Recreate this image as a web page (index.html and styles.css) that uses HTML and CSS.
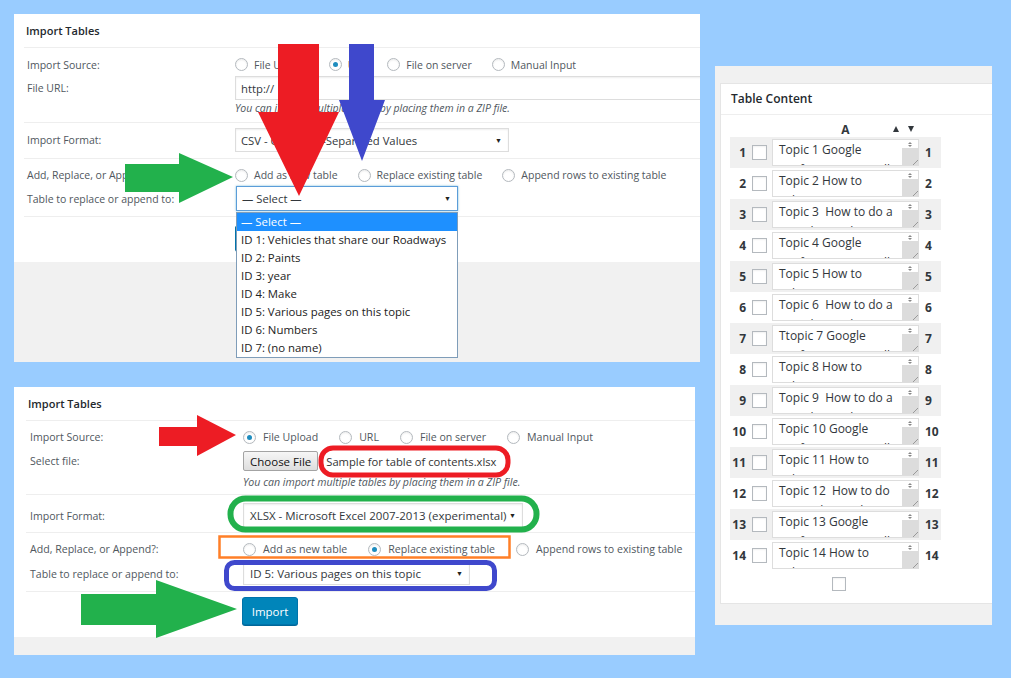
FILE: index.html
```html
<!DOCTYPE html>
<html lang="en">
<head>
<meta charset="utf-8">
<title>Import Tables</title>
<link rel="stylesheet" href="styles.css">
</head>
<body>
<div class="canvas">

  <section class="win win-top">
    <div class="box">
      <h2 class="hd">Import Tables</h2>
      <div class="form">
        <div class="grp g1">
          <div class="line l-radio"><span class="lbl">Import Source:</span>
            <div class="radios">
              <span class="opt"><i class="rad"></i>File Upload</span>
              <span class="opt"><i class="rad on"></i>URL</span>
              <span class="opt"><i class="rad"></i>File on server</span>
              <span class="opt"><i class="rad"></i>Manual Input</span>
            </div>
          </div>
          <div class="line l-input"><span class="lbl">File URL:</span>
            <div class="textbox url">http://</div>
          </div>
          <div class="line l-desc"><span></span><em class="desc">You can import multiple tables by placing them in a ZIP file.</em></div>
        </div>
        <div class="grp g2">
          <div class="line l-select"><span class="lbl">Import Format:</span>
            <div class="select fmt"><span>CSV - Character-Separated Values</span><span class="caret">&#9660;</span></div>
          </div>
        </div>
        <div class="grp g3">
          <div class="line l-radio2"><span class="lbl">Add, Replace, or Append?:</span>
            <div class="radios">
              <span class="opt"><i class="rad"></i>Add as new table</span>
              <span class="opt"><i class="rad"></i>Replace existing table</span>
              <span class="opt"><i class="rad"></i>Append rows to existing table</span>
            </div>
          </div>
          <div class="line l-select2"><span class="lbl">Table to replace or append to:</span>
            <div class="select tbl focus"><span>&mdash; Select &mdash;</span><span class="caret">&#9660;</span></div>
          </div>
        </div>
        <div class="grp g4">
          <div class="line"><span></span><span class="btn-primary">Import</span></div>
        </div>
      </div>
    </div>
    <ul class="dropdown">
      <li class="hl">&mdash; Select &mdash;</li>
      <li>ID 1: Vehicles that share our Roadways</li>
      <li>ID 2: Paints</li>
      <li>ID 3: year</li>
      <li>ID 4: Make</li>
      <li>ID 5: Various pages on this topic</li>
      <li>ID 6: Numbers</li>
      <li>ID 7: (no name)</li>
    </ul>
  </section>

  <section class="win win-bot">
    <div class="box">
      <h2 class="hd">Import Tables</h2>
      <div class="form">
        <div class="grp g1">
          <div class="line l-radio"><span class="lbl">Import Source:</span>
            <div class="radios">
              <span class="opt"><i class="rad on"></i>File Upload</span>
              <span class="opt"><i class="rad"></i>URL</span>
              <span class="opt"><i class="rad"></i>File on server</span>
              <span class="opt"><i class="rad"></i>Manual Input</span>
            </div>
          </div>
          <div class="line l-file"><span class="lbl">Select file:</span>
            <div class="filepick"><span class="btn-file">Choose File</span><span class="fname">Sample for table of contents.xlsx</span></div>
          </div>
          <div class="line l-desc"><span></span><em class="desc">You can import multiple tables by placing them in a ZIP file.</em></div>
        </div>
        <div class="grp g2">
          <div class="line l-select"><span class="lbl">Import Format:</span>
            <div class="select fmt"><span>XLSX - Microsoft Excel 2007-2013 (experimental)</span><span class="caret">&#9660;</span></div>
          </div>
        </div>
        <div class="grp g3">
          <div class="line l-radio2"><span class="lbl">Add, Replace, or Append?:</span>
            <div class="radios">
              <span class="opt"><i class="rad"></i>Add as new table</span>
              <span class="opt"><i class="rad on"></i>Replace existing table</span>
              <span class="opt"><i class="rad"></i>Append rows to existing table</span>
            </div>
          </div>
          <div class="line l-select2"><span class="lbl">Table to replace or append to:</span>
            <div class="select tbl"><span>ID 5: Various pages on this topic</span><span class="caret">&#9660;</span></div>
          </div>
        </div>
        <div class="grp g4">
          <div class="line"><span></span><span class="btn-primary">Import</span></div>
        </div>
      </div>
    </div>
  </section>

  <section class="win win-right">
    <div class="box">
      <h2 class="hd">Table Content</h2>
      <div class="tc">
        <div class="colhd">
          <span class="pad"></span>
          <div class="colA"><span></span><b>A</b><span class="sort"><i class="up"></i><i class="down"></i></span></div>
        </div>
        <div class="rows">
          <div class="row alt"><b class="num">1</b><i class="cb"></i><div class="ta"><p>Topic 1 Google verification using all</p><div class="sb"><span class="sb-top"></span><span class="sb-grip"></span></div></div><b class="num2">1</b></div>
          <div class="row"><b class="num">2</b><i class="cb"></i><div class="ta"><p>Topic 2 How to submit a sitemap</p><div class="sb"><span class="sb-top"></span><span class="sb-grip"></span></div></div><b class="num2">2</b></div>
          <div class="row alt"><b class="num">3</b><i class="cb"></i><div class="ta"><p>Topic 3  How to do a complete website audit</p><div class="sb"><span class="sb-top"></span><span class="sb-grip"></span></div></div><b class="num2">3</b></div>
          <div class="row"><b class="num">4</b><i class="cb"></i><div class="ta"><p>Topic 4 Google verification using all</p><div class="sb"><span class="sb-top"></span><span class="sb-grip"></span></div></div><b class="num2">4</b></div>
          <div class="row alt"><b class="num">5</b><i class="cb"></i><div class="ta"><p>Topic 5 How to submit a sitemap</p><div class="sb"><span class="sb-top"></span><span class="sb-grip"></span></div></div><b class="num2">5</b></div>
          <div class="row"><b class="num">6</b><i class="cb"></i><div class="ta"><p>Topic 6  How to do a complete website audit</p><div class="sb"><span class="sb-top"></span><span class="sb-grip"></span></div></div><b class="num2">6</b></div>
          <div class="row alt"><b class="num">7</b><i class="cb"></i><div class="ta"><p>Ttopic 7 Google verification using all</p><div class="sb"><span class="sb-top"></span><span class="sb-grip"></span></div></div><b class="num2">7</b></div>
          <div class="row"><b class="num">8</b><i class="cb"></i><div class="ta"><p>Topic 8 How to submit a sitemap</p><div class="sb"><span class="sb-top"></span><span class="sb-grip"></span></div></div><b class="num2">8</b></div>
          <div class="row alt"><b class="num">9</b><i class="cb"></i><div class="ta"><p>Topic 9  How to do a complete website audit</p><div class="sb"><span class="sb-top"></span><span class="sb-grip"></span></div></div><b class="num2">9</b></div>
          <div class="row"><b class="num">10</b><i class="cb"></i><div class="ta"><p>Topic 10 Google verification using all</p><div class="sb"><span class="sb-top"></span><span class="sb-grip"></span></div></div><b class="num2">10</b></div>
          <div class="row alt"><b class="num">11</b><i class="cb"></i><div class="ta"><p>Topic 11 How to submit a sitemap</p><div class="sb"><span class="sb-top"></span><span class="sb-grip"></span></div></div><b class="num2">11</b></div>
          <div class="row"><b class="num">12</b><i class="cb"></i><div class="ta"><p>Topic 12  How to do a complete website audit</p><div class="sb"><span class="sb-top"></span><span class="sb-grip"></span></div></div><b class="num2">12</b></div>
          <div class="row alt"><b class="num">13</b><i class="cb"></i><div class="ta"><p>Topic 13 Google verification using all</p><div class="sb"><span class="sb-top"></span><span class="sb-grip"></span></div></div><b class="num2">13</b></div>
          <div class="row"><b class="num">14</b><i class="cb"></i><div class="ta"><p>Topic 14 How to submit a sitemap</p><div class="sb"><span class="sb-top"></span><span class="sb-grip"></span></div></div><b class="num2">14</b></div>
        </div>
        <div class="foot"><i class="cb"></i></div>
      </div>
    </div>
  </section>

  <svg class="overlay" width="1011" height="678" viewBox="0 0 1011 678" aria-hidden="true">
    <!-- top panel arrows -->
    <polygon fill="#3f48cc" points="349,44 374,44 374,100 385,100 362,161 339,100 349,100"/>
    <polygon fill="#ed1c24" points="278,44 319,44 319,112 339,112 299,196 258,112 278,112"/>
    <polygon fill="#22b14c" points="125,164 179,164 179,153 233,177 179,203 179,192 125,192"/>
    <!-- bottom panel marks -->
    <polygon fill="#ed1c24" points="159,427 197,427 197,415 236,435 197,456 197,446 159,446"/>
    <polygon fill="#22b14c" points="81,594 156,594 156,580 237,609 156,638 156,625 81,625"/>
    <rect x="321" y="448" width="187" height="27" rx="12" fill="none" stroke="#ed1c24" stroke-width="5"/>
    <rect x="230.5" y="498.5" width="306" height="31" rx="15" fill="none" stroke="#22b14c" stroke-width="6"/>
    <rect x="219.5" y="536.5" width="290" height="21" fill="none" stroke="#ff7f27" stroke-width="2.5"/>
    <rect x="226.5" y="562.5" width="268" height="26" rx="8" fill="none" stroke="#3f48cc" stroke-width="5"/>
  </svg>
</div>
</body>
</html>
```

FILE: styles.css
```css
* { box-sizing: border-box; }

html, body {
  margin: 0;
  padding: 0;
}

body {
  background: #99ccff;
  font-family: "Open Sans", "Noto Sans", sans-serif;
  color: #444;
}

.canvas {
  position: relative;
  width: 1011px;
  height: 678px;
  overflow: hidden;
}

/* windows on the canvas */
.win {
  position: absolute;
  background: #f1f1f1;
  overflow: hidden;
}
.win-top { left: 14px; top: 14px; width: 686px; height: 348px; }
.win-bot { left: 14px; top: 387px; width: 681px; height: 268px; }
.win-right { left: 715px; top: 66px; width: 277px; height: 559px; padding: 17px 0 0 5px; }

.box { background: #fff; }
.win-top .box { height: 248px; }
.win-bot .box { height: 250px; }
.win-right .box { height: 521px; border: 1px solid #e5e5e5; border-right: 0; }

.hd {
  margin: 0;
  height: 33px;
  line-height: 33px;
  font-size: 11px;
  font-weight: 600;
  color: #23282d;
}
.win-top .hd { padding-left: 12px; }
.win-bot .hd { padding-left: 14px; }

/* form */
.form { border-top: 1px solid #eee; }
.win-top .form { margin-left: 10px; font-size: 10.5px; }
.win-bot .form { margin-left: 12px; font-size: 10.6px; }

.grp { border-bottom: 1px solid #eee; }
.grp.g4 { border-bottom: 0; }

.line {
  display: grid;
  align-items: center;
  color: #50575e;
}
.win-top .line { grid-template-columns: 211px 1fr; }
.win-bot .line { grid-template-columns: 217px 1fr; }

.win-top .lbl { padding-left: 3px; }
.win-bot .lbl { padding-left: 4px; }

.radios {
  display: flex;
  align-items: center;
  gap: 20px;
  white-space: nowrap;
}
.win-bot .radios { gap: 21px; }

.opt {
  display: inline-flex;
  align-items: center;
  color: #50575e;
}

.rad {
  position: relative;
  display: inline-block;
  width: 13px;
  height: 13px;
  border: 1px solid #b4b9be;
  border-radius: 50%;
  background: #fff;
  box-shadow: inset 0 1px 2px rgba(0,0,0,.08);
  margin-right: 6px;
  flex: none;
}
.win-bot .rad { margin-right: 7px; }
.rad.on::after {
  content: "";
  position: absolute;
  left: 3px;
  top: 3px;
  width: 5px;
  height: 5px;
  border-radius: 50%;
  background: #1e8cbe;
}

.textbox, .select {
  border: 1px solid #ddd;
  background: #fff;
  box-shadow: inset 0 1px 2px rgba(0,0,0,.07);
  color: #32373c;
  display: flex;
  align-items: center;
  white-space: nowrap;
}
.win-top .textbox, .win-top .select { font-size: 11.3px; }
.win-bot .select { font-size: 11.5px; }

.url { width: 480px; height: 24px; padding-left: 5px; }

.select { justify-content: space-between; padding: 0 6px 0 5px; }
.caret { font-size: 7px; color: #222; }

.desc {
  font-style: italic;
  color: #50575e;
  white-space: nowrap;
}

/* top panel rows */
.win-top .g1 { padding: 6px 0; }
.win-top .l-radio { height: 19px; margin-top: 1px; }
.win-top .l-input { height: 24px; margin-top: 2px; }
.win-top .l-desc { height: 16px; }
.win-top .g2 { padding: 5px 0 6px; }
.win-top .fmt { width: 274px; height: 24px; }
.win-top .g3 { padding: 7px 0 5px; }
.win-top .l-radio2 { height: 18px; }
.win-top .l-select2 { margin-top: 2px; }
.win-top .tbl { width: 222px; height: 25px; margin-left: 1px; }
.select.focus { border-color: #5b9dd9; box-shadow: 0 0 2px rgba(30,140,190,.6); }
.win-top .g4 { padding-top: 8px; }

/* bottom panel rows */
.win-bot .g1 { padding: 7px 0 4px; }
.win-bot .l-radio { height: 18px; }
.win-bot .l-file { height: 22px; margin-top: 4px; }
.win-bot .l-desc { height: 16px; margin-top: 2px; }
.win-bot .g2 { padding: 8px 0 4px; }
.win-bot .fmt { width: 280px; height: 25px; padding-left: 6px; }
.win-bot .g3 { padding: 7px 0 6px; }
.win-bot .l-radio2 { height: 18px; }
.win-bot .l-select2 { margin-top: 4px; }
.win-bot .tbl { width: 227px; height: 23px; padding-left: 6px; }
.win-bot .g4 { padding-top: 5px; }

.filepick {
  display: flex;
  align-items: center;
  gap: 8px;
  white-space: nowrap;
}
.btn-file {
  display: inline-flex;
  align-items: center;
  height: 20px;
  padding: 0 6px;
  font-size: 11.5px;
  color: #111;
  border: 1px solid #a3a3a3;
  border-radius: 2px;
  background: linear-gradient(#f6f6f6, #dedede);
}
.fname { font-size: 11.2px; color: #333; }

.btn-primary {
  justify-self: start;
  display: inline-flex;
  align-items: center;
  justify-content: center;
  background: #0085ba;
  border: 1px solid #0073aa;
  border-radius: 3px;
  box-shadow: 0 1px 0 #006799;
  color: #fff;
  font-size: 11.5px;
}
.win-top .btn-primary { width: 56px; height: 26px; }
.win-bot .btn-primary { width: 56px; height: 28px; margin-left: -1px; }

/* open dropdown list */
.dropdown {
  position: absolute;
  left: 222px;
  top: 198px;
  width: 222px;
  margin: 0;
  padding: 0;
  list-style: none;
  background: #fff;
  border: 1px solid #7f9db9;
  font-size: 11.4px;
  color: #222;
}
.dropdown li {
  height: 18px;
  line-height: 18px;
  padding-left: 4px;
  white-space: nowrap;
}
.dropdown li.hl { background: #1e90ff; color: #fff; }

/* table content panel */
.win-right .hd {
  height: 31px;
  line-height: 30px;
  padding-left: 10px;
  font-size: 12px;
  border-bottom: 1px solid #eee;
}
.tc { padding: 6px 10px 0 9px; }

.colhd { display: flex; height: 16px; align-items: center; }
.colhd .pad { width: 42px; flex: none; }
.colA {
  width: 147px;
  display: grid;
  grid-template-columns: 1fr auto 1fr;
  align-items: center;
}
.colA b { font-size: 12px; color: #32373c; }
.sort { justify-self: end; display: flex; gap: 9px; padding-right: 5px; }
.sort i { width: 0; height: 0; border-left: 3.5px solid transparent; border-right: 3.5px solid transparent; }
.sort .up { border-bottom: 6px solid #32373c; }
.sort .down { border-top: 6px solid #32373c; }

.rows { display: flex; flex-direction: column; }
.row {
  display: flex;
  align-items: center;
  height: 31px;
  width: 211px;
}
.row.alt { background: #f0f0f0; }
.num, .num2 { font-size: 12px; color: #32373c; font-weight: 700; }
.num { width: 16px; text-align: right; flex: none; }
.num2 { margin-left: 6px; }

.cb {
  display: inline-block;
  width: 15px;
  height: 15px;
  border: 1px solid #b4b9be;
  background: #fff;
  box-shadow: inset 0 1px 2px rgba(0,0,0,.06);
  flex: none;
}
.row .cb { margin-left: 6px; }

.ta {
  display: flex;
  width: 147px;
  height: 27px;
  margin-left: 5px;
  border: 1px solid #ddd;
  background: #fff;
  overflow: hidden;
  flex: none;
}
.ta p {
  margin: 0;
  flex: 1;
  padding: 0 5px 0 6px;
  font-size: 12px;
  line-height: 20px;
  color: #32373c;
  white-space: pre-wrap;
  overflow: hidden;
}
.sb { width: 16px; display: flex; flex-direction: column; flex: none; }
.sb-top {
  height: 8px;
  position: relative;
}
.sb-top::before, .sb-top::after {
  content: "";
  position: absolute;
  left: 6px;
  width: 0;
  height: 0;
  border-left: 2px solid transparent;
  border-right: 2px solid transparent;
}
.sb-top::before { top: 2px; border-bottom: 2px solid #888; }
.sb-top::after { top: 5px; border-top: 2px solid #888; }
.sb-grip {
  flex: 1;
  background:
    linear-gradient(135deg, transparent 0 70%, #999 70% 74%, transparent 74% 84%, #999 84% 88%, transparent 88%) right bottom / 9px 9px no-repeat,
    #dcdcdc;
}

.foot { display: flex; justify-content: center; padding-top: 6px; width: 211px; padding-left: 6px; }
.foot .cb { width: 14px; height: 14px; }

.overlay {
  position: absolute;
  left: 0;
  top: 0;
  pointer-events: none;
}
```
